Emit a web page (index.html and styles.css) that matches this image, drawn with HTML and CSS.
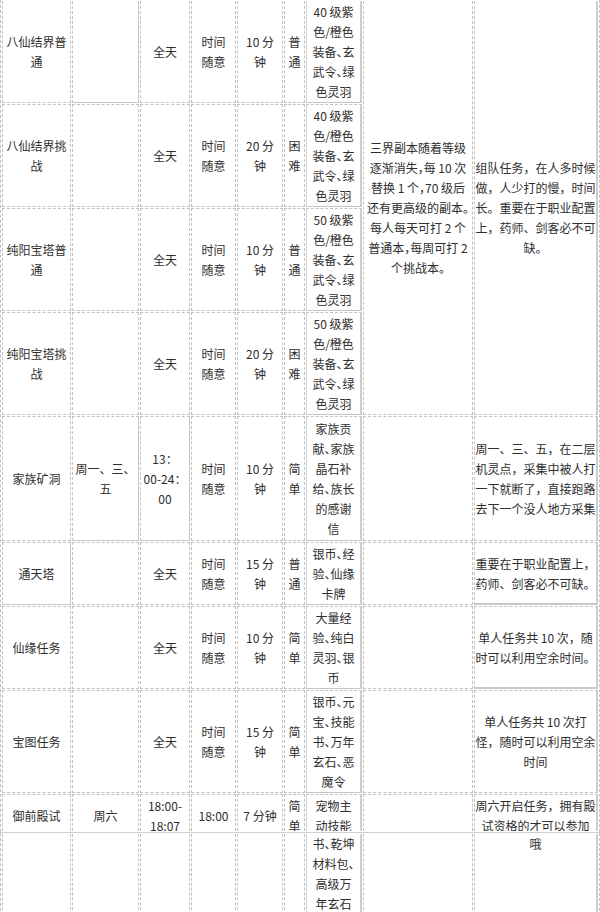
FILE: index.html
```html
<!DOCTYPE html>
<html lang="zh-CN">
<head>
<meta charset="utf-8">
<title>日常任务表</title>
<link rel="stylesheet" href="styles.css">
</head>
<body>
<table class="grid main">
  <tr class="first">
    <td class="c1">八仙结界普通</td>
    <td class="c2 s"></td>
    <td class="c3">全天</td>
    <td class="c4">时间随意</td>
    <td class="c5">10 分钟</td>
    <td class="c6">普通</td>
    <td class="c7 rw">40 级紫色/橙色装备、玄武令、绿色灵羽</td>
    <td class="c8 big" rowspan="4">三界副本随着等级逐渐消失，每 10 次替换 1 个，70 级后还有更高级的副本。每人每天可打 2 个普通本，每周可打 2 个挑战本。</td>
    <td class="c9 nt" rowspan="4">组队任务，在人多时候做，人少打的慢，时间长。重要在于职业配置上，药师、剑客必不可缺。</td>
  </tr>
  <tr>
    <td>八仙结界挑战</td>
    <td></td>
    <td>全天</td>
    <td>时间随意</td>
    <td>20 分钟</td>
    <td>困难</td>
    <td class="rw">40 级紫色/橙色装备、玄武令、绿色灵羽</td>
  </tr>
  <tr>
    <td>纯阳宝塔普通</td>
    <td></td>
    <td>全天</td>
    <td>时间随意</td>
    <td>10 分钟</td>
    <td>普通</td>
    <td class="rw">50 级紫色/橙色装备、玄武令、绿色灵羽</td>
  </tr>
  <tr>
    <td>纯阳宝塔挑战</td>
    <td></td>
    <td>全天</td>
    <td>时间随意</td>
    <td>20 分钟</td>
    <td>困难</td>
    <td class="rw">50 级紫色/橙色装备、玄武令、绿色灵羽</td>
  </tr>
  <tr class="r5">
    <td>家族矿洞</td>
    <td class="s">周一、三、五</td>
    <td class="s">13：<span class="nw">00-24：</span>00</td>
    <td>时间随意</td>
    <td>10 分钟</td>
    <td>简单</td>
    <td class="rw">家族贡献、家族晶石补给、族长的感谢信</td>
    <td></td>
    <td class="nt">周一、三、五，在二层机灵点，采集中被人打一下就断了，直接跑路去下一个没人地方采集</td>
  </tr>
  <tr>
    <td class="s">通天塔</td>
    <td></td>
    <td>全天</td>
    <td>时间随意</td>
    <td>15 分钟</td>
    <td>普通</td>
    <td class="rw">银币、经验、仙缘卡牌</td>
    <td></td>
    <td class="nt s2">重要在于职业配置上，药师、剑客必不可缺。</td>
  </tr>
  <tr>
    <td>仙缘任务</td>
    <td></td>
    <td>全天</td>
    <td>时间随意</td>
    <td>10 分钟</td>
    <td>简单</td>
    <td class="rw">大量经验、纯白灵羽、银币</td>
    <td></td>
    <td class="nt s2">单人任务共 10 次，随时可以利用空余时间。</td>
  </tr>
  <tr>
    <td>宝图任务</td>
    <td></td>
    <td>全天</td>
    <td>时间随意</td>
    <td>15 分钟</td>
    <td>简单</td>
    <td class="rw">银币、元宝、技能书、万年玄石、恶魔令</td>
    <td></td>
    <td class="nt">单人任务共 10 次打怪，随时可以利用空余时间</td>
  </tr>
  <tr class="cut">
    <td><div class="clip"><div class="box">御前殿试</div></div></td>
    <td><div class="clip"><div class="box">周六</div></div></td>
    <td><div class="clip"><div class="box">18:00-<wbr>18:07</div></div></td>
    <td><div class="clip"><div class="box">18:00</div></div></td>
    <td><div class="clip"><div class="box">7 分钟</div></div></td>
    <td><div class="clip"><div class="box">简单</div></div></td>
    <td class="rw"><div class="clip"><div class="box">宠物主动技能</div></div></td>
    <td></td>
    <td class="nt"><div class="clip"><div class="box">周六开启任务，拥有殿试资格的才可以参加</div></div></td>
  </tr>
</table>
<div class="tail">
  <table class="grid rest">
    <tr>
      <td class="c1"></td>
      <td class="c2"></td>
      <td class="c3"></td>
      <td class="c4"></td>
      <td class="c5"></td>
      <td class="c6"></td>
      <td class="c7 rw">书、乾坤材料包、高级万年玄石</td>
      <td class="c8"></td>
      <td class="c9 nt">哦</td>
    </tr>
  </table>
</div>
</body>
</html>
```
FILE: styles.css
```css
html, body {
  margin: 0;
  padding: 0;
  background: #ffffff;
}

.grid {
  width: 600px;
  table-layout: fixed;
  border-collapse: separate;
  border-spacing: 1px;
  border: 1px dashed #c2c2c2;
  border-top: none;
  border-bottom: none;
  font-family: "Noto Sans CJK SC", "Noto Sans", sans-serif;
  font-size: 12px;
  line-height: 20px;
  color: #2e2e2e;
}

.grid td {
  box-sizing: border-box;
  border: 1px dashed #c2c2c2;
  padding: 1px 0 0;
  text-align: center;
  vertical-align: middle;
}

.grid tr.first td {
  border-top: none;
}

/* column widths (first row drives the fixed layout) */
.c1 { width: 69px; }
.c2 { width: 67px; }
.c3 { width: 50px; }
.c4 { width: 45px; }
.c5 { width: 46px; }
.c6 { width: 21px; }
.c7 { width: 56px; }
.c8 { width: 110px; }
.c9 { width: 124px; }

/* column paddings, every row */
.grid td:nth-child(1) { padding-left: 3px; padding-right: 3px; }
.grid td:nth-child(3) { padding-left: 1px; padding-right: 1px; }
.grid td:nth-child(4) { padding-left: 5px; padding-right: 5px; }
.grid td:nth-child(5) { padding-left: 3px; padding-right: 3px; }
.grid td.big { padding-left: 2px; padding-right: 2px; font-feature-settings: "halt"; }

.nw { white-space: nowrap; }

.grid td.rw {
  padding: 1px 4px 0;
  border-left: 1px solid #d2d2d2;
  border-right: 2px solid #cdcdcd;
  border-bottom: 1px solid #c4c4c4;
  font-feature-settings: "halt";
}

.grid tr.r5 td.rw {
  padding-top: 2px;
  padding-bottom: 1px;
}

.grid td.nt {
  border-right: 2px solid #cdcdcd;
}

.grid td.s {
  border-right: 1px solid #c6c6c6;
  border-bottom: 1px solid #c6c6c6;
}

.grid td.s2 {
  border-bottom: 2px solid #c8c8c8;
}

.grid tr.cut td {
  vertical-align: top;
  border-bottom: none;
  padding-top: 1px;
}

.clip {
  height: 35px;
  overflow: hidden;
}

.box {
  height: 40px;
  display: flex;
  align-items: center;
  justify-content: center;
  text-align: center;
}

.tail {
  border-top: 1px solid #cfcfcf;
}

.rest td {
  height: 80px;
  padding: 0;
  vertical-align: top;
  border-top: none;
}

.grid.rest td.rw {
  padding: 0 4px;
}
```
